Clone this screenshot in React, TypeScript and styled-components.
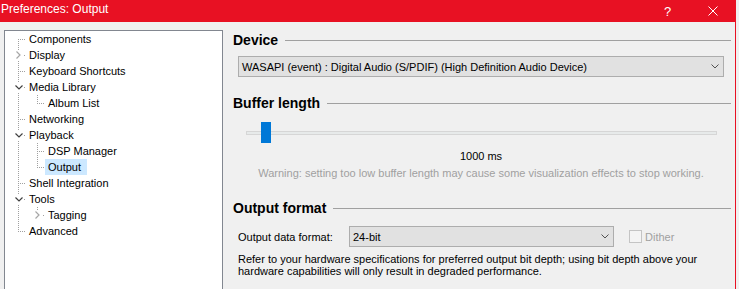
import styled, { createGlobalStyle } from 'styled-components';

const GlobalStyle = createGlobalStyle`
    html, body {
        margin: 0;
        padding: 0;
        background: #f0f0f0;
        overflow: hidden;
    }
    * {
        box-sizing: border-box;
    }
`;

const UI_FONT = '"Liberation Sans", Arial, sans-serif';
const DOTS_V = 'repeating-linear-gradient(to bottom, #a0a0a0 0 1px, transparent 1px 2px)';
const DOTS_H = 'repeating-linear-gradient(to right, #a0a0a0 0 1px, transparent 1px 2px)';

interface TreeRow {
    label: string;
    level: number;
    ancestors: boolean[];
    top: boolean;
    bottom: boolean;
    expander?: 'open' | 'closed';
    selected?: boolean;
}

const rows: TreeRow[] = [
    {label: 'Components', level: 0, ancestors: [], top: false, bottom: true},
    {label: 'Display', level: 0, ancestors: [], top: true, bottom: true, expander: 'closed'},
    {label: 'Keyboard Shortcuts', level: 0, ancestors: [], top: true, bottom: true},
    {label: 'Media Library', level: 0, ancestors: [], top: true, bottom: true, expander: 'open'},
    {label: 'Album List', level: 1, ancestors: [true], top: true, bottom: false},
    {label: 'Networking', level: 0, ancestors: [], top: true, bottom: true},
    {label: 'Playback', level: 0, ancestors: [], top: true, bottom: true, expander: 'open'},
    {label: 'DSP Manager', level: 1, ancestors: [true], top: true, bottom: true},
    {label: 'Output', level: 1, ancestors: [true], top: true, bottom: false, selected: true},
    {label: 'Shell Integration', level: 0, ancestors: [], top: true, bottom: true},
    {label: 'Tools', level: 0, ancestors: [], top: true, bottom: true, expander: 'open'},
    {label: 'Tagging', level: 1, ancestors: [true], top: true, bottom: false, expander: 'closed'},
    {label: 'Advanced', level: 0, ancestors: [], top: true, bottom: false},
];

const Window = styled.div`
    width: 736px;
    height: 289px;
    overflow: hidden;
    background: #f0f0f0;
    border-right: 1px solid #e81123;
    font-family: ${UI_FONT};
    display: flex;
    flex-direction: column;
`;

const TitleBar = styled.div`
    height: 22px;
    flex-shrink: 0;
    background: #e81123;
    color: #ffffff;
    display: flex;
    align-items: flex-start;
`;

const Title = styled.div`
    flex: 1;
    font-size: 12px;
    line-height: 16px;
    padding: 1px 0 0 1px;
`;

const TitleButton = styled.div`
    width: 45px;
    height: 22px;
    display: flex;
    align-items: center;
    justify-content: center;
    font-size: 13px;
`;

const Body = styled.div`
    flex: 1;
    min-height: 0;
    display: flex;
    align-items: flex-start;
    padding: 8px 0 0 4px;
`;

const Tree = styled.div`
    width: 219px;
    height: 264px;
    flex-shrink: 0;
    background: #ffffff;
    border: 1px solid #828790;
    padding: 0 0 0 4px;
`;

const Row = styled.div`
    height: 16px;
    display: flex;
    align-items: stretch;
`;

const Guide = styled.div<{$line: boolean}>`
    width: 19px;
    flex-shrink: 0;
    background: ${props => (props.$line ? DOTS_V : 'none')} 9px 0 / 1px 100% no-repeat;
`;

const Connector = styled.div<{$top: boolean; $bottom: boolean}>`
    width: 17px;
    flex-shrink: 0;
    position: relative;
    background:
        ${props => (props.$top ? `${DOTS_V} 9px 0 / 1px 8px no-repeat,` : '')}
        ${props => (props.$bottom ? `${DOTS_V} 9px 8px / 1px 8px no-repeat,` : '')}
        ${DOTS_H} 9px 8px / 8px 1px no-repeat;
`;

const Expander = styled.div`
    position: absolute;
    left: 5px;
    top: 3px;
    width: 9px;
    height: 10px;
    background: #ffffff;
    display: flex;
    align-items: center;
    justify-content: center;
`;

const Label = styled.div<{$selected?: boolean}>`
    font-size: 11px;
    line-height: 16px;
    color: #000000;
    padding: 0 6px 0 3px;
    white-space: nowrap;
    background: ${props => (props.$selected ? '#cce8ff' : 'transparent')};
`;

const Panel = styled.div`
    flex: 1;
    padding: 2px 4px 0 10px;
`;

const Header = styled.div<{$top: number}>`
    display: flex;
    align-items: center;
    gap: 7px;
    margin-top: ${props => props.$top}px;
    font-size: 14px;
    font-weight: bold;
    line-height: 16px;
    color: #000000;

    &::after {
        content: '';
        flex: 1;
        height: 1px;
        background: #a0a0a0;
    }
`;

const Section = styled.div`
    padding: 0 7px 0 5px;
    font-size: 11px;
    color: #000000;
`;

const Combo = styled.div<{$top?: number; $width?: number}>`
    height: 21px;
    margin-top: ${props => props.$top ?? 0}px;
    width: ${props => (props.$width ? `${props.$width}px` : '100%')};
    background: #e1e1e1;
    border: 1px solid #adadad;
    display: flex;
    align-items: center;
    padding: 0 4px 0 3px;
    font-size: 11px;
    white-space: nowrap;
`;

const ComboText = styled.span`
    flex: 1;
`;

const Slider = styled.div`
    height: 21px;
    margin-top: 11px;
    padding: 9px 7px 0 8px;
`;

const Track = styled.div`
    position: relative;
    height: 4px;
    background: #e7eaea;
    border: 1px solid #d6d6d6;
`;

const Thumb = styled.div`
    position: absolute;
    left: 14px;
    top: -10px;
    width: 10px;
    height: 21px;
    background: #0078d7;
`;

const Centered = styled.div<{$top: number; $muted?: boolean}>`
    margin-top: ${props => props.$top}px;
    text-align: center;
    line-height: 16px;
    color: ${props => (props.$muted ? '#a0a0a0' : '#000000')};
`;

const FormatRow = styled.div`
    display: flex;
    align-items: center;
    margin-top: 10px;
`;

const FieldLabel = styled.div`
    width: 111px;
    flex-shrink: 0;
`;

const Check = styled.div`
    display: flex;
    align-items: center;
    gap: 3px;
    margin-left: 15px;
    color: #a0a0a0;
`;

const CheckBox = styled.div`
    width: 13px;
    height: 13px;
    border: 1px solid #c4c4c4;
    background: #f4f4f4;
`;

const Note = styled.p`
    margin: 6px 0 0 0;
    line-height: 12px;
`;

function Chevron({open}: {open: boolean}) {
    return open ? (
        <svg width="8" height="5" viewBox="0 0 8 5">
            <polyline points="0.5,0.5 4,4 7.5,0.5" fill="none" stroke="#404040" strokeWidth="1.2" />
        </svg>
    ) : (
        <svg width="5" height="8" viewBox="0 0 5 8">
            <polyline points="0.5,0.5 4,4 0.5,7.5" fill="none" stroke="#a6a6a6" strokeWidth="1.2" />
        </svg>
    );
}

function DropArrow() {
    return (
        <svg width="8" height="5" viewBox="0 0 8 5">
            <polyline points="0.5,0.5 4,4 7.5,0.5" fill="none" stroke="#505050" strokeWidth="1" />
        </svg>
    );
}

export default function App() {
    return (
        <>
            <GlobalStyle />
            <Window>
                <TitleBar>
                    <Title>Preferences: Output</Title>
                    <TitleButton>?</TitleButton>
                    <TitleButton>
                        <svg width="10" height="10" viewBox="0 0 10 10">
                            <path d="M0.5 0.5 L9.5 9.5 M9.5 0.5 L0.5 9.5" stroke="#ffffff" strokeWidth="1" />
                        </svg>
                    </TitleButton>
                </TitleBar>
                <Body>
                    <Tree>
                        {rows.map((row, index) => (
                            <Row key={index}>
                                {row.ancestors.map((line, i) => (
                                    <Guide $line={line} key={i} />
                                ))}
                                <Connector $top={row.top} $bottom={row.bottom}>
                                    {row.expander && (
                                        <Expander>
                                            <Chevron open={row.expander === 'open'} />
                                        </Expander>
                                    )}
                                </Connector>
                                <Label $selected={row.selected}>{row.label}</Label>
                            </Row>
                        ))}
                    </Tree>
                    <Panel>
                        <Header $top={0}>Device</Header>
                        <Section>
                            <Combo $top={8}>
                                <ComboText>WASAPI (event) : Digital Audio (S/PDIF) (High Definition Audio Device)</ComboText>
                                <DropArrow />
                            </Combo>
                        </Section>
                        <Header $top={18}>Buffer length</Header>
                        <Section>
                            <Slider>
                                <Track>
                                    <Thumb />
                                </Track>
                            </Slider>
                            <Centered $top={5}>1000 ms</Centered>
                            <Centered $top={1} $muted>
                                Warning: setting too low buffer length may cause some visualization effects to stop working.
                            </Centered>
                        </Section>
                        <Header $top={19}>Output format</Header>
                        <Section>
                            <FormatRow>
                                <FieldLabel>Output data format:</FieldLabel>
                                <Combo $width={265}>
                                    <ComboText>24-bit</ComboText>
                                    <DropArrow />
                                </Combo>
                                <Check>
                                    <CheckBox />
                                    Dither
                                </Check>
                            </FormatRow>
                            <Note>
                                Refer to your hardware specifications for preferred output bit depth; using bit depth above your
                                hardware capabilities will only result in degraded performance.
                            </Note>
                        </Section>
                    </Panel>
                </Body>
            </Window>
        </>
    );
}
